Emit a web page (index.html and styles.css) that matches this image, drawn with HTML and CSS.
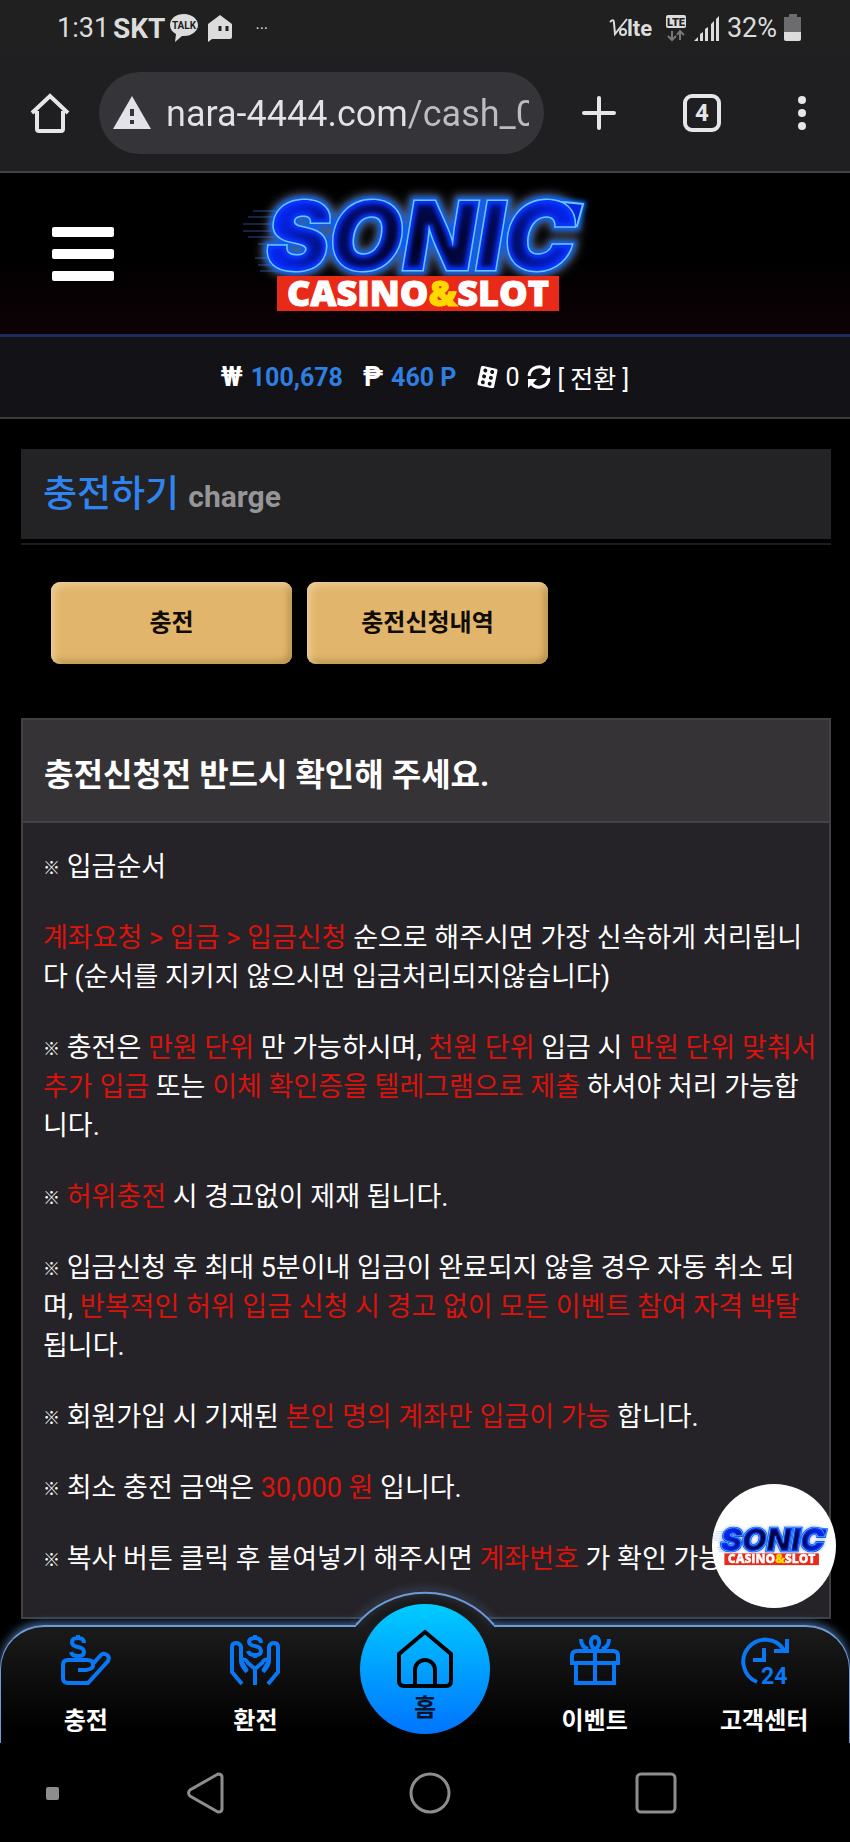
FILE: index.html
```html
<!DOCTYPE html>
<html lang="ko">
<head>
<meta charset="utf-8">
<meta name="viewport" content="width=device-width, initial-scale=1">
<title>충전하기</title>
<link rel="stylesheet" href="styles.css">
</head>
<body>
<svg class="defs" aria-hidden="true">
  <defs>
    <radialGradient id="sonicFill" gradientUnits="userSpaceOnUse" cx="185" cy="58" r="150" gradientTransform="translate(0 29) scale(1 .5)">
      <stop offset="0" stop-color="#01021c"/>
      <stop offset=".55" stop-color="#020a5c"/>
      <stop offset="1" stop-color="#0424e8"/>
    </radialGradient>
    <filter id="glow" x="-20%" y="-40%" width="140%" height="180%"><feGaussianBlur stdDeviation="5"/></filter>
    <filter id="soft" x="-20%" y="-40%" width="140%" height="180%"><feGaussianBlur stdDeviation="2"/></filter>
    <clipPath id="sonicClip"><text class="sonic" x="26" y="86">SONIC</text></clipPath>
    <symbol id="logo" viewBox="0 0 370 140">
      <g stroke="#3566c8" stroke-width="1" opacity=".7">
        <path d="M13 27H60M8 33H60M3 40H60M3 47H55M8 53H55M18 60H50M15 74H50M18 81H50M20 87H50"/>
      </g>
      <text class="sonic" x="26" y="86" fill="#8fa5c8" stroke="#8fa5c8" stroke-width="12" opacity=".6" filter="url(#glow)">SONIC</text>
      <text class="sonic" x="26" y="86" fill="#0b5cf0" stroke="#0b5cf0" stroke-width="8" filter="url(#soft)">SONIC</text>
      <path d="M300 18Q320 17 343 20L337 42L318 36z" fill="#0b5cf0" stroke="#0b5cf0" stroke-width="6" filter="url(#soft)"/>
      <path d="M300 18Q320 17 343 20L337 42L318 36z" fill="#0424e8" stroke="#62c8ff" stroke-width="2"/>
      <text class="sonic" x="26" y="86" fill="url(#sonicFill)" stroke="#62c8ff" stroke-width="3">SONIC</text>
      <g clip-path="url(#sonicClip)">
        <text class="sonic" x="26" y="86" fill="url(#sonicFill)">SONIC</text>
        <text class="sonic" x="26" y="86" fill="none" stroke="#0a34ff" stroke-width="7" filter="url(#soft)">SONIC</text>
      </g>
      <rect x="37" y="92" width="282" height="35" fill="#ea2a18"/>
      <text class="casino" x="178" y="122" text-anchor="middle" fill="#fff" stroke="#fff">CASINO<tspan fill="#ffd800" stroke="#ffd800">&amp;</tspan>SLOT</text>
    </symbol>
  </defs>
</svg>

<div class="status">
  <span class="clock">1:31</span>
  <b class="carrier">SKT</b>
  <svg class="talk" width="30" height="30" viewBox="0 0 30 30" aria-hidden="true"><path d="M15 1C7 1 1 5.500 1 12c0 4 2 7 6 9l-1 8 7-6h2c8 0 14-5 14-11S23 1 15 1z" fill="#dcdcdc"/><text class="talk-text" x="15" y="16" text-anchor="middle">TALK</text></svg>
  <svg class="house" width="26" height="28" viewBox="0 0 26 28" aria-hidden="true"><path d="M13 1l12 9v13q0 2-2 2H5l-4 3V10z" fill="#dcdcdc"/><path d="M13 12v5M20 12v5" stroke="#202020" stroke-width="3"/></svg>
  <span class="more">···</span>
  <span class="status-right">
    <svg width="46" height="26" viewBox="0 0 46 26" aria-hidden="true"><path d="M1 7q4-4 4 1l1 11L18 4" fill="none" stroke="#dcdcdc" stroke-width="2"/><circle cx="14" cy="17" r="3" fill="none" stroke="#dcdcdc" stroke-width="2"/><text class="lte-text" x="18" y="21">lte</text></svg>
    <svg class="lte" width="22" height="28" viewBox="0 0 22 28" aria-hidden="true"><rect x="1" y="1" width="20" height="13" rx="2" fill="#dcdcdc"/><text class="lte-box" x="11" y="12" text-anchor="middle">LTE</text><path d="M7 17v8M3 22l4 4 4-4M15 26v-8M12 21l3-4 4 4" fill="none" stroke="#77777a" stroke-width="2"/></svg>
    <svg width="26" height="27" viewBox="0 0 26 27" aria-hidden="true"><path d="M0 26l4-4v4zM6 19l3-2v9H6zM11 14l3-2v14h-3zM17 9l3-3v20h-3zM22 4l3-3v25h-3z" fill="#dcdcdc"/></svg>
    <span class="clock">32%</span>
    <svg class="battery" width="18" height="28" viewBox="0 0 18 28" aria-hidden="true"><path d="M0 3h5V0h8v3h4v16H0z" fill="#6c6b6e"/><path d="M0 18h17v7q0 2-2 2H2q-2 0-2-2z" fill="#dcdcdc"/></svg>
  </span>
</div>

<div class="browser">
  <button class="icon-btn" aria-label="홈 페이지"><svg width="40" height="40" viewBox="0 0 40 40"><path d="M2 20L20 3l18 17M7 18v18q0 2 2 2h22q2 0 2-2V18" fill="none" stroke="#e6e5ea" stroke-width="4"/></svg></button>
  <label class="url">
    <svg width="38" height="33" viewBox="0 0 38 33" aria-hidden="true"><path d="M19 0l19 33H0z" fill="#e3e2e9"/><path d="M19 13v7M19 24v4" stroke="#353439" stroke-width="4"/></svg>
    <input class="url-input" type="text" value="nara-4444.com/cash_01" aria-label="주소">
  </label>
  <button class="icon-btn" aria-label="새 탭"><svg width="34" height="34" viewBox="0 0 34 34"><path d="M17 2v30M2 17h30" stroke="#e6e5ea" stroke-width="4" stroke-linecap="round"/></svg></button>
  <button class="tabs">4</button>
  <button class="icon-btn" aria-label="메뉴"><svg width="10" height="36" viewBox="0 0 10 36"><g fill="#e6e5ea"><circle cx="5" cy="5" r="4"/><circle cx="5" cy="18" r="4"/><circle cx="5" cy="31" r="4"/></g></svg></button>
</div>

<header class="site">
  <button class="burger" aria-label="메뉴 열기"><span></span><span></span><span></span></button>
  <svg class="site-logo" role="img" aria-label="SONIC CASINO&amp;SLOT"><use href="#logo"/></svg>
</header>

<div class="balance">
  <span class="pair"><b class="sign">₩</b><b class="amount">100,678</b></span>
  <span class="pair"><b class="sign">₱</b><b class="amount">460 P</b></span>
  <span class="pair casino-money">
    <svg width="22" height="22" viewBox="0 0 22 22" aria-hidden="true"><g transform="rotate(12 11 11)"><rect x="3" y="1" width="17" height="20" rx="2" fill="#fff"/><g fill="#131216"><circle cx="8" cy="5" r="2"/><circle cx="15" cy="5" r="2"/><circle cx="8" cy="11" r="2"/><circle cx="15" cy="11" r="2"/><circle cx="8" cy="17" r="2"/><circle cx="15" cy="17" r="2"/></g></g></svg>
    <span>0</span>
    <svg width="24" height="24" viewBox="0 0 24 24" aria-hidden="true"><path d="M2 11a10 10 0 0 1 18-5M22 13a10 10 0 0 1-18 5" fill="none" stroke="#fff" stroke-width="3"/><path d="M23 1v9h-9zM1 23v-9h9z" fill="#fff"/></svg>
    <a class="switch" href="#">[ 전환 ]</a>
  </span>
</div>

<main class="content">
  <h1 class="title">충전하기 <small>charge</small></h1>
  <div class="actions">
    <button class="gold">충전</button>
    <button class="gold">충전신청내역</button>
  </div>
  <section class="panel">
    <h2 class="panel-head">충전신청전 반드시 확인해 주세요.</h2>
    <div class="panel-body">
      <p><i>※</i> 입금순서</p>
      <p><em>계좌요청 &gt; 입금 &gt; 입금신청</em> 순으로 해주시면 가장 신속하게 처리됩니다 (순서를 지키지 않으시면 입금처리되지않습니다)</p>
      <p><i>※</i> 충전은 <em>만원 단위</em> 만 가능하시며, <em>천원 단위</em> 입금 시 <em>만원 단위 맞춰서 추가 입금</em> 또는 <em>이체 확인증을 텔레그램으로 제출</em> 하셔야 처리 가능합니다.</p>
      <p><i>※</i> <em>허위충전</em> 시 경고없이 제재 됩니다.</p>
      <p><i>※</i> 입금신청 후 최대 5분이내 입금이 완료되지 않을 경우 자동 취소 되며, <em>반복적인 허위 입금 신청 시 경고 없이 모든 이벤트 참여 자격 박탈</em> 됩니다.</p>
      <p><i>※</i> 회원가입 시 기재된 <em>본인 명의 계좌만 입금이 가능</em> 합니다.</p>
      <p><i>※</i> 최소 충전 금액은 <em>30,000 원</em> 입니다.</p>
      <p><i>※</i> 복사 버튼 클릭 후 붙여넣기 해주시면 <em>계좌번호</em> 가 확인 가능</p>
    </div>
  </section>
</main>

<a class="float" href="#" aria-label="SONIC CASINO&amp;SLOT"><svg><use href="#logo"/></svg></a>

<nav class="dock">
  <svg class="bump" width="180" height="70" viewBox="0 0 180 70" aria-hidden="true"><path class="bump-fill" d="M21 53A90 90 0 0 1 159 53V60H21z"/><path class="bump-line" d="M21 52A90 90 0 0 1 159 52"/></svg>
  <a class="dock-item" href="#">
    <svg width="50" height="50" viewBox="0 0 50 50"><path d="M17 35h8q8-1 7-6 0-4-6-4H7q-5 0-5 5v13q0 5 5 5h20l20-22q2-4-1-6-4-3-7 1l-8 9M17 25v-4M23 8q0-5-6-5t-6 4q0 4 6 5t6 5q0 4-6 4t-7-4M17 0v3"/></svg>
    <span>충전</span>
  </a>
  <a class="dock-item" href="#">
    <svg width="50" height="50" viewBox="0 0 50 50"><path d="M12 49L2 37V12q0-4 4-4t5 4v14l6 10M17 37q-8-9-5-12 3-2 6 3l7 6v16M25 34l7-6q3-5 6-3 3 3-5 12M33 36l6-10V12q1-4 5-4t4 4v25L38 49M31 8q0-5-6-5t-6 4q0 3 6 4t6 5q0 4-6 4t-7-4M25 0v3M25 20v3"/></svg>
    <span>환전</span>
  </a>
  <a class="dock-item home" href="#">
    <svg width="60" height="60" viewBox="0 0 60 60"><path d="M4 26L30 4l26 22v27q0 5-5 5H9q-5 0-5-5zM20 57V42a10 10 0 0 1 20 0v15"/></svg>
    <span>홈</span>
  </a>
  <a class="dock-item" href="#">
    <svg width="50" height="50" viewBox="0 0 50 50"><path d="M2 28V21q0-5 5-5h36q5 0 5 5v7zM6 28v20h38V28M25 16v32M25 15q-5-5-4-9 1-4 4-4t4 4q1 4-4 9M11 4q0 8 7 10M39 4q0 8-7 10"/></svg>
    <span>이벤트</span>
  </a>
  <a class="dock-item" href="#">
    <svg width="50" height="50" viewBox="0 0 50 50"><path d="M18 47A22 22 0 1 1 45 15M48 4v12H35M25 13v12H14"/><text class="h24" x="22" y="49">24</text></svg>
    <span>고객센터</span>
  </a>
</nav>

<div class="system">
  <span class="dot"></span>
  <div class="system-buttons">
    <button class="icon-btn" aria-label="뒤로"><svg width="38" height="42" viewBox="0 0 38 42"><path d="M32 2L4 18q-3 3 0 6l28 16q4 0 4-3V5q0-3-4-3z" fill="none" stroke="#8d8c8f" stroke-width="3"/></svg></button>
    <button class="icon-btn" aria-label="홈 화면"><svg width="42" height="42" viewBox="0 0 42 42"><circle cx="21" cy="21" r="19" fill="none" stroke="#8d8c8f" stroke-width="3"/></svg></button>
    <button class="icon-btn" aria-label="최근 앱"><svg width="42" height="42" viewBox="0 0 42 42"><rect x="2" y="2" width="38" height="38" rx="4" fill="none" stroke="#8d8c8f" stroke-width="3"/></svg></button>
  </div>
</div>
</body>
</html>
```
FILE: styles.css
```css
* { box-sizing: border-box; }
body {
  margin: 0;
  min-height: 100vh;
  display: flex;
  flex-direction: column;
  background: #000;
  color: #fff;
  font-family: Roboto, "Noto Sans CJK KR", sans-serif;
  font-size: 24px;
}
button { font: inherit; border: 0; padding: 0; background: none; color: inherit; }
a { color: inherit; text-decoration: none; }
svg { display: block; flex: none; }
.defs { position: absolute; width: 0; height: 0; }
.sonic { font: italic 900 95px Inter, sans-serif; }
.casino { font: 800 36px "Open Sans", sans-serif; }

.status {
  display: flex;
  align-items: center;
  height: 56px;
  padding: 0 48px 0 57px;
  background: #202020;
  color: #dcdcdc;
}
.clock { font-size: 27px; }
.carrier { font-size: 28px; margin-left: 4px; }
.talk { margin-left: 4px; }
.house { margin-left: 8px; }
.talk-text { font: 700 10px Roboto, sans-serif; fill: #202020; }
.more { margin-left: 22px; font-size: 16px; }
.status-right { margin-left: auto; display: flex; align-items: center; }
.status-right .clock { margin: 0 7px; }
.lte { margin: 0 7px 0 10px; }
.lte-text { font: 700 22px Roboto, sans-serif; fill: #dcdcdc; }
.lte-box { font: 900 11px Roboto, sans-serif; fill: #202020; }

.browser {
  display: flex;
  align-items: center;
  height: 117px;
  padding: 0 43px 2px 30px;
  background: #1f1f22;
  border-bottom: 2px solid #424147;
}
.icon-btn { display: grid; place-items: center; }
.url {
  flex: 1;
  min-width: 0;
  display: flex;
  align-items: center;
  gap: 15px;
  height: 82px;
  margin: 0 38px 0 29px;
  padding: 0 15px 0 14px;
  border-radius: 41px;
  background: #353439;
}
.url-input {
  flex: 1;
  min-width: 0;
  height: 50px;
  padding: 2px 0 0;
  border: 0;
  font: 36px Roboto, sans-serif;
  color: transparent;
  background: linear-gradient(90deg, #e3e2e8 240px, #bdbcc2 240px);
  -webkit-background-clip: text;
  background-clip: text;
}
.tabs {
  width: 38px;
  height: 38px;
  margin: 0 76px 0 67px;
  border: 4px solid #e6e5ea;
  border-radius: 9px;
  color: #e6e5ea;
  font-weight: 700;
  line-height: 30px;
}

.site {
  display: grid;
  grid-template-columns: 1fr auto 1fr;
  align-items: center;
  height: 164px;
  padding: 0 52px;
  background: linear-gradient(#000 50%, #0d0206);
  border-bottom: 3px solid #1d2a5c;
}
.burger { display: grid; gap: 12px; width: 62px; }
.burger span { height: 10px; border-radius: 2px; background: #fff; }
.site-logo { width: 370px; height: 140px; }

.balance {
  display: flex;
  justify-content: center;
  align-items: center;
  gap: 20px;
  height: 82px;
  background: #131216;
  border-bottom: 2px solid #3c3b40;
}
.pair { display: flex; align-items: center; gap: 8px; }
.sign { font-size: 27px; }
.amount { font-size: 25px; color: #2f7fe0; }
.casino-money { gap: 7px; font-size: 25px; }

.content { padding: 30px 19px 6px 21px; }
.title {
  margin: 0;
  padding: 0 22px;
  height: 90px;
  line-height: 92px;
  font-size: 37px;
  font-weight: 500;
  color: #2f84f0;
  background: #232225;
  box-shadow: 0 4px #000, 0 6px #1c1b1e;
}
.title small { font-size: 30px; font-weight: 700; color: #969598; }
.actions { display: flex; gap: 15px; margin: 43px 0 54px 30px; }
.gold {
  width: 241px;
  height: 82px;
  padding-bottom: 6px;
  border-radius: 9px;
  background: #e1b66c;
  box-shadow: inset 3px 3px 7px #f0cfa0, inset -3px -3px 7px #b18b48;
  color: #100b04;
  font-weight: 700;
}
.panel { border: 2px solid #414045; background: #252327; }
.panel-head {
  margin: 0;
  padding: 0 21px;
  height: 103px;
  line-height: 110px;
  font-size: 32px;
  font-weight: 700;
  background: #363337;
  border-bottom: 2px solid #444247;
}
.panel-body { padding: 25px 9px 38px 20px; font-size: 27px; line-height: 39px; }
.panel-body p { margin: 0 0 32px; }
.panel-body p:last-child { margin: 0; }
.panel-body em { font-style: normal; color: #dc120d; }
.panel-body i { font-style: normal; font-size: 17px; font-weight: 900; line-height: 1; vertical-align: 2px; }

.float {
  position: fixed;
  right: 14px;
  bottom: 234px;
  z-index: 3;
  width: 124px;
  height: 124px;
  border-radius: 50%;
  background: #fff;
  display: grid;
  place-items: center;
}
.float svg { width: 124px; height: 48px; }

.dock {
  position: relative;
  display: grid;
  grid-template-columns: repeat(5, 1fr);
  height: 118px;
  border: solid #6f9ad6;
  border-width: 2px 1px 0;
  border-radius: 44px 44px 0 0;
  background: linear-gradient(#1b1b1c, #000 90%);
  box-shadow: 0 -3px 8px #3d5f8c;
  clip-path: inset(-60px 0 0 0);
}
.bump { position: absolute; left: 50%; top: -54px; margin-left: -90px; overflow: visible; }
.bump-fill { fill: #1b1b1c; }
.bump-line { fill: none; stroke: #6f9ad6; stroke-width: 2; filter: drop-shadow(0 -2px 4px #4f74a8); }
.dock-item {
  position: relative;
  display: flex;
  flex-direction: column;
  align-items: center;
  gap: 18px;
  padding-top: 8px;
  font-weight: 700;
  line-height: 36px;
}
.dock-item svg { fill: none; stroke: #0a78f5; stroke-width: 4; overflow: visible; }
.dock-item .h24 { font: 700 23px Roboto, sans-serif; fill: #0a78f5; stroke: none; }
.dock-item.home {
  justify-self: center;
  width: 130px;
  height: 130px;
  margin-top: -23px;
  padding-top: 24px;
  gap: 2px;
  border-radius: 50%;
  background: linear-gradient(#00ccff, #0074ff);
  color: #05132b;
}
.home svg { stroke: #000; }

.system {
  display: flex;
  align-items: center;
  gap: 127px;
  height: 100px;
  padding: 0 173px 0 46px;
}
.system-buttons { flex: 1; display: flex; justify-content: space-between; }
.dot { width: 13px; height: 13px; border-radius: 2px; background: #8d8c8f; }
```
